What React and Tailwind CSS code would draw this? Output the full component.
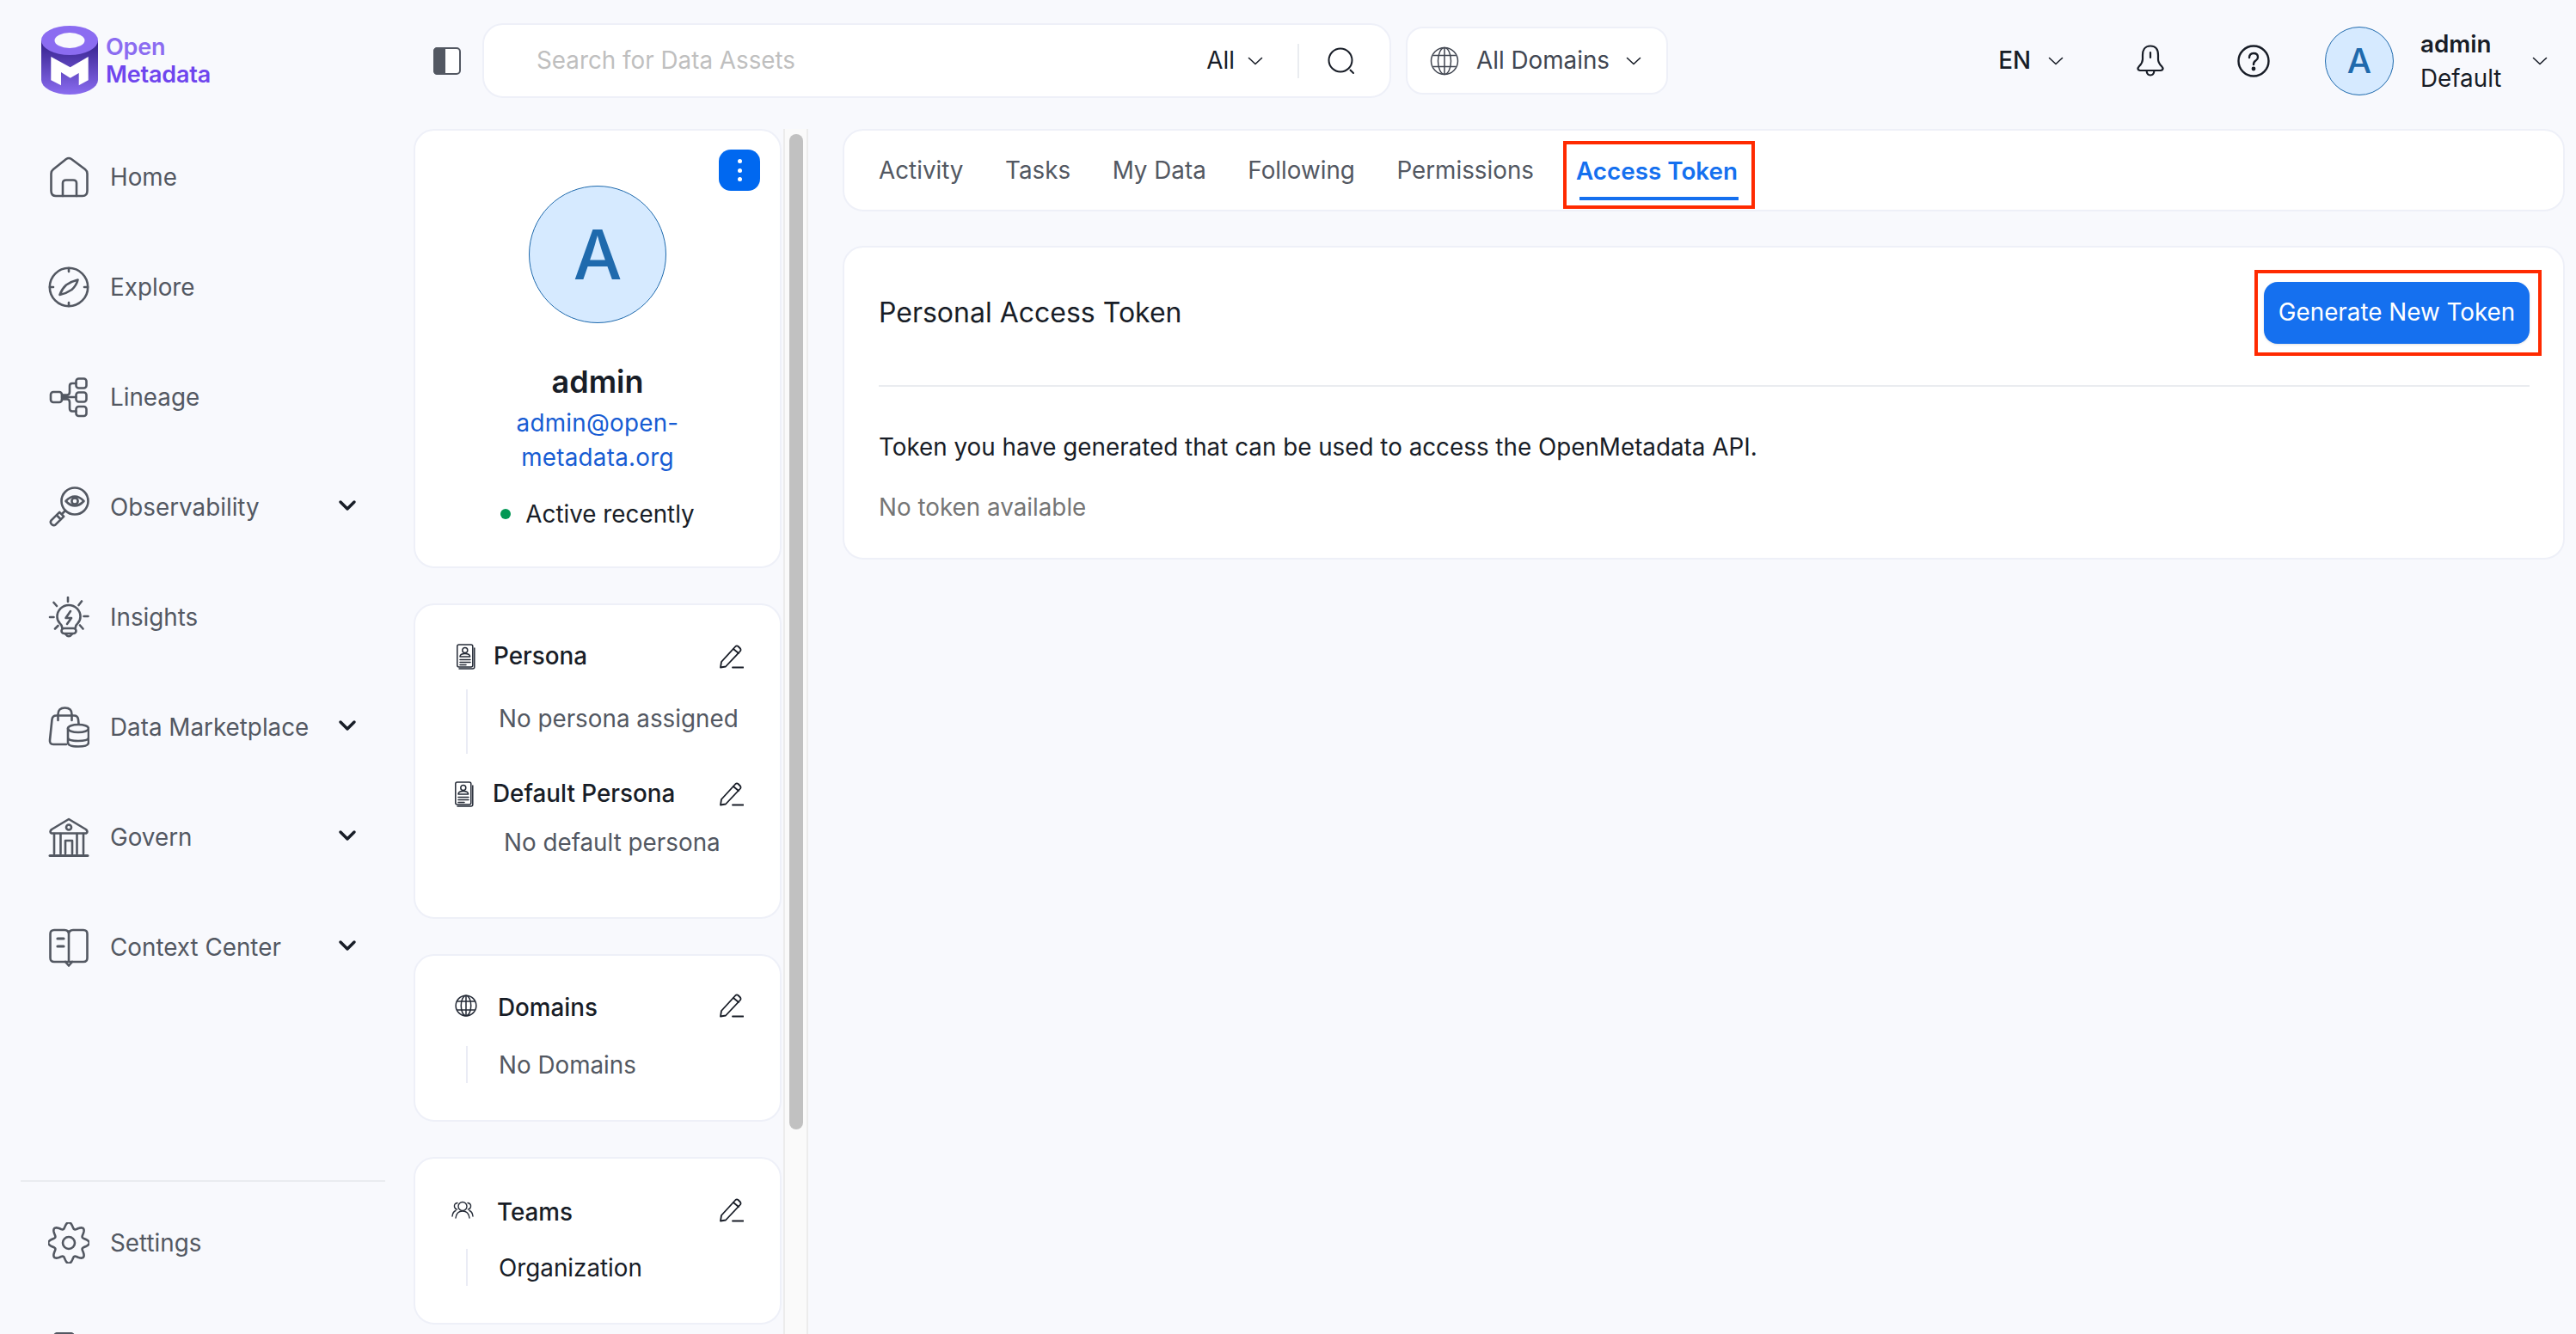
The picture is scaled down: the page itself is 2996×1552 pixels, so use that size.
import { ChevronDown } from 'lucide-react'

const navStroke = {
  fill: 'none',
  stroke: '#535862',
  strokeWidth: 2.6,
  strokeLinecap: 'round',
  strokeLinejoin: 'round',
}

function Logo() {
  return (
    <svg width="66" height="80" viewBox="0 0 66 80" className="shrink-0">
      <defs>
        <linearGradient id="logoBody" x1="0" y1="20" x2="0" y2="80" gradientUnits="userSpaceOnUse">
          <stop offset="0" stopColor="#37238f" />
          <stop offset="1" stopColor="#8a6cf0" />
        </linearGradient>
      </defs>
      <path d="M0 17V63A33 17 0 0 0 66 63V17Z" fill="url(#logoBody)" />
      <ellipse cx="33" cy="17" rx="33" ry="17" fill="#8b6cf1" />
      <ellipse cx="33" cy="17" rx="17.5" ry="9" fill="#f8f9fd" />
      <path d="M11.3 36L33.7 48.3L54.7 36V63.3L43.7 69.3V55L33.7 60.7L23 54V69.3L11.3 63.3Z" fill="#fff" />
    </svg>
  )
}

function HomeIcon() {
  return (
    <svg width="48" height="48" viewBox="0 0 48 48" className="shrink-0" {...navStroke}>
      <path d="M3.5 20Q3.5 17 6 15L21 3Q24 1 27 3L43 15Q45.5 17 45.5 20V40Q45.5 46 40 46H9Q3.5 46 3.5 40Z" />
      <path d="M17 46V31Q17 27.5 21 27.5H29Q33 27.5 33 31V46" />
    </svg>
  )
}

function ExploreIcon() {
  return (
    <svg width="48" height="48" viewBox="0 0 48 48" className="shrink-0" {...navStroke}>
      <circle cx="24" cy="24" r="22.2" />
      <path d="M24 2V6M24 42V46M2 24H6M42 24H46" />
      <path d="M13.5 33Q16 26 21 21.5Q28 17 34.5 15.5Q33 22 27.5 27Q21 31.5 13.5 33Z" />
    </svg>
  )
}

function LineageIcon() {
  return (
    <svg width="48" height="48" viewBox="0 0 48 48" className="shrink-0" {...navStroke}>
      <rect x="3" y="18" width="13" height="12" rx="3" />
      <rect x="32.5" y="2.5" width="12" height="11" rx="3" />
      <rect x="32.5" y="18.5" width="12" height="11" rx="3" />
      <rect x="32.5" y="35" width="12" height="11" rx="3" />
      <path d="M16 24H32.5M16 21.5H22Q25 21.5 25 18V11Q25 8 28 8H32.5M16 26.5H22Q25 26.5 25 30V37Q25 40.5 28 40.5H32.5" />
    </svg>
  )
}

function ObservabilityIcon() {
  return (
    <svg width="48" height="48" viewBox="0 0 48 48" className="shrink-0" {...navStroke}>
      <circle cx="31" cy="17" r="15.5" />
      <path d="M20.5 17Q31 6 41.5 17Q31 28 20.5 17Z" />
      <circle cx="31" cy="17" r="3.6" />
      <path d="M20 28L16 32" />
      <path d="M13.2 29.8L18.2 34.8L8.6 44.4Q6.6 46 4.6 44.4L3.6 43.4Q2 41.4 3.6 39.4Z" />
      <path d="M10 33.5L14.5 38" />
    </svg>
  )
}

function InsightsIcon() {
  return (
    <svg width="48" height="48" viewBox="0 0 48 48" className="shrink-0" {...navStroke}>
      <path d="M16.5 37Q16 33 13.5 31Q10.5 28 10.5 23.5A13.5 13.5 0 0 1 37.5 23.5Q37.5 28 34.5 31Q32 33 31.5 37" />
      <path d="M26 17L20.5 25H27L22 32" />
      <rect x="15.5" y="37" width="17" height="6" rx="3" />
      <path d="M20 43.5Q24 49 28 43.5" />
      <path d="M23 1V6M6.5 7L10 11M39 5.5L35.5 10M2 24H6.5M41.5 23H46.5M8 37.5L11.5 34M37 33.5L40.5 37.5" />
    </svg>
  )
}

function MarketplaceIcon() {
  return (
    <svg width="48" height="48" viewBox="0 0 48 48" className="shrink-0" {...navStroke}>
      <path d="M21 44H6Q1.5 44 2 39L4.5 15Q5 10.5 9.5 10.5H30Q34.5 10.5 35 15L35.5 20" />
      <path d="M11.5 16V9Q11.5 1.5 19.5 1.5Q27.5 1.5 27.5 9V16" />
      <ellipse cx="35" cy="25.5" rx="12" ry="4.5" />
      <path d="M23 25.5V42Q23 46.5 35 46.5Q47 46.5 47 42V25.5M23 36Q23 40 35 40Q47 40 47 36" />
    </svg>
  )
}

function GovernIcon() {
  return (
    <svg width="48" height="48" viewBox="0 0 48 48" className="shrink-0" {...navStroke}>
      <path d="M24 3L44 15Q47 18 44 19.5H4Q1 18 4 15Z" />
      <circle cx="24" cy="12.5" r="3" />
      <path d="M7 20V43M14.5 20V43M33.5 20V43M41 20V43M20 43V28H28V43" />
      <path d="M2 45.5H46" strokeWidth="3" />
    </svg>
  )
}

function ContextIcon() {
  return (
    <svg width="48" height="48" viewBox="0 0 48 48" className="shrink-0" {...navStroke}>
      <path d="M24 41H7Q2.5 41 2.5 36.5V8.5Q2.5 4 7 4H19Q24 4 24 9V41Q31 41 41 41Q45.5 41 45.5 36.5V8.5Q45.5 4 41 4H29Q24 4 24 9" />
      <path d="M11 14H18M11 23H18" strokeWidth="3.2" />
      <path d="M20 41L24 45.5L28 41" />
    </svg>
  )
}

// eight round lobes, same as the settings cog in the reference
function gearPath() {
  const pts = []
  for (let i = 0; i < 160; i++) {
    const t = (i / 160) * Math.PI * 2
    const r = 20.4 + 3.4 * Math.cos(8 * t)
    pts.push(`${(24 + r * Math.cos(t)).toFixed(2)} ${(24 + r * Math.sin(t)).toFixed(2)}`)
  }
  return `M${pts.join('L')}Z`
}

function SettingsIcon() {
  return (
    <svg width="48" height="48" viewBox="0 0 48 48" className="shrink-0" {...navStroke}>
      <path d={gearPath()} />
      <circle cx="24" cy="24" r="7" />
    </svg>
  )
}

// only the top edge of this one shows above the fold
function LogoutIcon() {
  return (
    <svg width="48" height="48" viewBox="0 0 48 48" className="shrink-0" {...navStroke}>
      <path d="M30 10V6Q30 1 25 1H12Q7 1 7 6V39Q7 44 12 44H25Q30 44 30 39V36M20 24H44M37 17L44 24L37 31" />
    </svg>
  )
}

function NavRow({ icon: Icon, label, caret }) {
  return (
    <div className="flex h-[128px] shrink-0 items-center pl-[56px] pr-[61px]">
      <Icon />
      {label && <span className="ml-[24px] text-[27.8px] leading-[40px] text-[#535862]">{label}</span>}
      {caret && <ChevronDown className="-mt-[4px] ml-auto h-[32px] w-[32px] text-[#181d27]" strokeWidth={2.6} />}
    </div>
  )
}

function Caret({ className }) {
  return (
    <svg viewBox="0 0 18 10" className={className} fill="none" stroke="#181d27" strokeWidth="1.6" strokeLinecap="round" strokeLinejoin="round">
      <path d="M1.5 1.5L9 8.5L16.5 1.5" />
    </svg>
  )
}

function EditIcon() {
  return (
    <svg width="28" height="28" viewBox="0 0 28 28" className="ml-auto shrink-0" fill="none" stroke="#181d27" strokeWidth="1.8" strokeLinejoin="round" strokeLinecap="round">
      <path d="M1 26.5L2 20L18.5 2Q20 0.8 21.5 2L24 4.5Q25 6 24 7.5L7 25.5Z" />
      <path d="M16 5L22 10M15 26.5H27.5" />
    </svg>
  )
}

function PersonaIcon() {
  return (
    <svg width="22" height="30" viewBox="0 0 22 30" className="shrink-0" fill="none" stroke="#252b37" strokeWidth="1.5" strokeLinejoin="round" strokeLinecap="round">
      <rect x="0.8" y="1" width="18" height="26" rx="2" />
      <path d="M20.8 5V27Q20.8 29 18.8 29H3" />
      <circle cx="9.8" cy="7.5" r="3" />
      <path d="M4 15Q4 11.5 9.8 11.5Q15.6 11.5 15.6 15Z" />
      <path d="M4 18.5H16M4 21.5H16M4 24.5H11" />
    </svg>
  )
}

function GlobeIcon({ size, color = '#252b37', weight = 2 }) {
  return (
    <svg width={size} height={size} viewBox="0 0 34 34" className="shrink-0" fill="none" stroke={color} strokeWidth={weight}>
      <circle cx="17" cy="17" r="15.5" />
      <ellipse cx="17" cy="17" rx="7.5" ry="15.5" />
      <path d="M17 1.5V32.5M3.5 10.5H30.5M3.5 23.5H30.5" />
    </svg>
  )
}

function TeamsIcon() {
  return (
    <svg width="26" height="22" viewBox="0 0 26 22" className="shrink-0" fill="none" stroke="#252b37" strokeWidth="1.4" strokeLinecap="round">
      <circle cx="13" cy="6.5" r="5" />
      <path d="M5 20Q6 12 13 12Q20 12 21 20" />
      <path d="M7 2.5Q3 3 3.5 7Q4 9.5 6.5 10M1 18Q1.5 13 5 11.5M19 2.5Q23 3 22.5 7Q22 9.5 19.5 10M25 18Q24.5 13 21 11.5" />
    </svg>
  )
}

function Avatar({ className, letter }) {
  return (
    <div className={`flex shrink-0 items-center justify-center rounded-full border border-[#1f6aad] bg-[#d6eaff] font-medium text-[#1f6aad] ${className}`}>
      {letter}
    </div>
  )
}

export default function App() {
  const tabs = ['Activity', 'Tasks', 'My Data', 'Following', 'Permissions']

  return (
    <div className="flex h-screen w-full overflow-hidden bg-[#f8f9fd] font-['Inter',sans-serif] text-[#181d27]">
      {/* sidebar */}
      <aside className="flex h-screen w-[481px] shrink-0 flex-col overflow-hidden">
        <div className="flex h-[142px] shrink-0 items-start pl-[48px] pt-[30px]">
          <Logo />
          <div className="ml-[9px] mt-[9px] text-[27px] font-semibold leading-[32px] tracking-[-0.2px]">
            <div className="text-[#8b6cf1]">Open</div>
            <div className="text-[#6f46ee]">Metadata</div>
          </div>
        </div>
        <div className="h-[1231px] shrink-0">
          {[
            [HomeIcon, 'Home', false],
            [ExploreIcon, 'Explore', false],
            [LineageIcon, 'Lineage', false],
            [ObservabilityIcon, 'Observability', true],
            [InsightsIcon, 'Insights', false],
            [MarketplaceIcon, 'Data Marketplace', true],
            [GovernIcon, 'Govern', true],
            [ContextIcon, 'Context Center', true],
          ].map(([icon, label, caret]) => (
            <NavRow key={label} icon={icon} label={label} caret={caret} />
          ))}
        </div>
        <div className="mx-[24px] h-[2px] w-[424px] shrink-0 bg-[#eaecf0]" />
        <div className="shrink-0 pt-[7px]">
          <NavRow icon={SettingsIcon} label="Settings" />
          <NavRow icon={LogoutIcon} />
        </div>
      </aside>

      <div className="flex h-screen min-w-0 flex-1 flex-col">
        {/* top bar */}
        <header className="flex h-[150px] shrink-0 items-center pb-[9px] pl-[23px] pr-[33px]">
          <svg width="32" height="32" viewBox="0 0 32 32" className="shrink-0">
            <rect x="1" y="1" width="30" height="30" rx="4" fill="#fff" stroke="#535862" strokeWidth="2" />
            <path d="M5 0H14V32H5Q0 32 0 27V5Q0 0 5 0Z" fill="#535862" />
          </svg>
          <div className="ml-[25px] flex h-[87px] w-[1057px] shrink-0 items-center rounded-[24px] border-2 border-[#eef0f8] bg-white pl-[61px]">
            <span className="text-[27.8px] text-[#bfbfbf]">Search for Data Assets</span>
            <span className="ml-auto text-[27.8px]">All</span>
            <Caret className="ml-[15px] h-[10px] w-[18px]" />
            <div className="ml-[40px] h-[40px] w-[2px] bg-[#eaecf0]" />
            <svg width="32" height="32" viewBox="0 0 32 32" className="ml-[33px] mr-[40px]" fill="none" stroke="#181d27" strokeWidth="2" strokeLinecap="round">
              <circle cx="15" cy="15" r="13.5" />
              <path d="M26.5 26.5L30 30" />
            </svg>
          </div>
          <div className="ml-[17px] flex h-[79px] w-[305px] shrink-0 items-center rounded-[20px] border-2 border-[#eef0f8] bg-white pl-[26px]">
            <GlobeIcon size={34} color="#414651" weight={1.5} />
            <span className="ml-[20px] text-[27.8px] text-[#414651]">All Domains</span>
            <Caret className="ml-[19px] h-[10px] w-[18px]" />
          </div>
          <div className="ml-auto flex items-center">
            <span className="text-[27.8px] font-medium">EN</span>
            <Caret className="ml-[20px] h-[10px] w-[18px]" />
            <svg width="34" height="37" viewBox="0 0 34 37" className="ml-[84px]" fill="none" stroke="#181d27" strokeWidth="2.2" strokeLinecap="round" strokeLinejoin="round">
              <path d="M17 1.5C10 1.5 8 7 8 12V17Q8 21 4 25Q0.5 29 5 30H29Q33.5 29 30 25Q26 21 26 17V12C26 7 24 1.5 17 1.5Z" />
              <path d="M17 9V15M12.5 30Q13 35.5 17 35.5Q21 35.5 21.5 30" />
            </svg>
            <svg width="38" height="38" viewBox="0 0 38 38" className="ml-[84px]" fill="none" stroke="#181d27" strokeWidth="2.4" strokeLinecap="round">
              <circle cx="19" cy="19" r="17.5" />
              <path d="M14 15Q14 10 19 10Q24 10 24 14.5Q24 17 21.5 18.5Q19 20 19 23" />
              <circle cx="19" cy="28" r="1.2" fill="#181d27" />
            </svg>
            <Avatar className="ml-[64px] h-[80px] w-[80px] text-[40px]" letter="A" />
            <div className="ml-[31px] w-[130px]">
              <div className="text-[27.8px] font-semibold leading-[40px]">admin</div>
              <div className="text-[27.8px] leading-[40px]">Default</div>
            </div>
            <Caret className="h-[10px] w-[18px]" />
          </div>
        </header>

        <div className="flex min-h-0 flex-1">
          {/* user profile column */}
          <div className="flex w-[428px] shrink-0 flex-col gap-[41px]">
            <section className="relative flex h-[511px] shrink-0 flex-col items-center rounded-[24px] border-2 border-[#eef0f8] bg-white pt-[64px]">
              <button className="absolute right-[23px] top-[22px] flex h-[48px] w-[48px] flex-col items-center justify-center gap-[5.5px] rounded-[14px] bg-[#0068f0]">
                <span className="h-[5px] w-[5px] rounded-full bg-white" />
                <span className="h-[5px] w-[5px] rounded-full bg-white" />
                <span className="h-[5px] w-[5px] rounded-full bg-white" />
              </button>
              <Avatar className="h-[160px] w-[160px] text-[80px]" letter="A" />
              <div className="mt-[46px] text-[36px] font-semibold leading-[44px]">admin</div>
              <div className="mt-[6px] px-[40px] text-center text-[27.8px] leading-[40px] tracking-[0.25px] text-[#175cd3]">admin@open-metadata.org</div>
              <div className="mt-[26px] flex items-center text-[27.8px] leading-[40px]">
                <span className="h-[12px] w-[12px] rounded-full bg-[#039855]" />
                <span className="ml-[17px]">Active recently</span>
              </div>
            </section>

            <section className="h-[367px] shrink-0 rounded-[24px] border-2 border-[#eef0f8] bg-white pl-[48px] pr-[42px] pt-[38px]">
              <div className="flex h-[44px] items-center">
                <PersonaIcon />
                <span className="ml-[21px] text-[27.8px] font-medium">Persona</span>
                <EditIcon />
              </div>
              <div className="mt-[16px] flex h-[75px]">
                <div className="ml-[11px] h-full w-[2px] bg-[#eaecf5]" />
                <div className="ml-[36px] mt-[14px] text-[27.8px] leading-[40px] text-[#535862]">No persona assigned</div>
              </div>
              <div className="-ml-[2px] mt-[25px] flex h-[44px] items-center">
                <PersonaIcon />
                <span className="ml-[22px] text-[27.8px] font-medium">Default Persona</span>
                <EditIcon />
              </div>
              <div className="ml-[55px] mt-[14px] text-[27.8px] leading-[40px] text-[#535862]">No default persona</div>
            </section>

            <section className="h-[195px] shrink-0 rounded-[24px] border-2 border-[#eef0f8] bg-white pl-[48px] pr-[42px] pt-[36px]">
              <div className="-ml-[2px] flex h-[44px] items-center">
                <GlobeIcon size={26} />
                <span className="ml-[24px] mt-[6px] text-[27.8px] font-medium">Domains</span>
                <EditIcon />
              </div>
              <div className="mt-[25px] flex h-[43px] items-center">
                <div className="ml-[11px] h-full w-[2px] bg-[#eaecf5]" />
                <div className="ml-[36px] text-[27.8px] leading-[40px] text-[#535862]">No Domains</div>
              </div>
            </section>

            <section className="h-[195px] shrink-0 rounded-[24px] border-2 border-[#eef0f8] bg-white pl-[48px] pr-[42px] pt-[38px]">
              <div className="-ml-[6px] flex h-[44px] items-center">
                <TeamsIcon />
                <span className="ml-[27px] mt-[6px] text-[27.8px] font-medium">Teams</span>
                <EditIcon />
              </div>
              <div className="mt-[23px] flex h-[43px] items-center">
                <div className="ml-[11px] h-full w-[2px] bg-[#eaecf5]" />
                <div className="ml-[36px] text-[27.8px] leading-[40px]">Organization</div>
              </div>
            </section>
          </div>

          {/* the column's scrollbar */}
          <div className="ml-[2px] w-[29px] shrink-0 border-x-2 border-[#ececec] bg-[#fafafa] pl-[5px] pt-[6px]">
            <div className="h-[1158px] w-[16px] rounded-[8px] bg-[#c1c1c1]" />
          </div>

          {/* tabs and token */}
          <main className="ml-[40px] min-w-0 flex-1 pr-[13px]">
            <nav className="flex h-[96px] items-center rounded-[24px] border-2 border-[#eef0f8] bg-white pl-[40px] pt-[1px]">
              {tabs.map((tab) => (
                <span key={tab} className="mr-[48.5px] text-[27.8px] text-[#535862]">{tab}</span>
              ))}
              <div className="-ml-[15px] mb-px flex h-[79px] w-[223px] flex-col items-center self-end border-4 border-[#ff2a00]">
                <span className="-ml-[4px] mt-[11px] text-[27.8px] font-semibold leading-[40px] text-[#1570ef]">Access Token</span>
                <span className="mt-[10px] h-[4px] w-[185px] bg-[#1570ef]" />
              </div>
            </nav>
            <section className="mt-[40px] h-[365px] rounded-[24px] border-2 border-[#eef0f8] bg-white pl-[40px] pr-[39px]">
              <div className="flex h-[162px] items-center justify-between border-b-2 border-[#eaecf0] pb-[8px]">
                <h2 className="text-[32px] font-normal">Personal Access Token</h2>
                <div className="flex h-[100px] w-[334px] translate-x-[14px] items-center border-4 border-[#ff2a00] pl-[7px]">
                  <button className="h-[72px] w-[309px] rounded-[16px] bg-[#1570ef] text-[27.8px] text-white shadow-sm">Generate New Token</button>
                </div>
              </div>
              <p className="mt-[50px] text-[27.8px] leading-[40px]">Token you have generated that can be used to access the OpenMetadata API.</p>
              <p className="mt-[30px] text-[27.8px] leading-[40px] text-[#757575]">No token available</p>
            </section>
          </main>
        </div>
      </div>
    </div>
  )
}
